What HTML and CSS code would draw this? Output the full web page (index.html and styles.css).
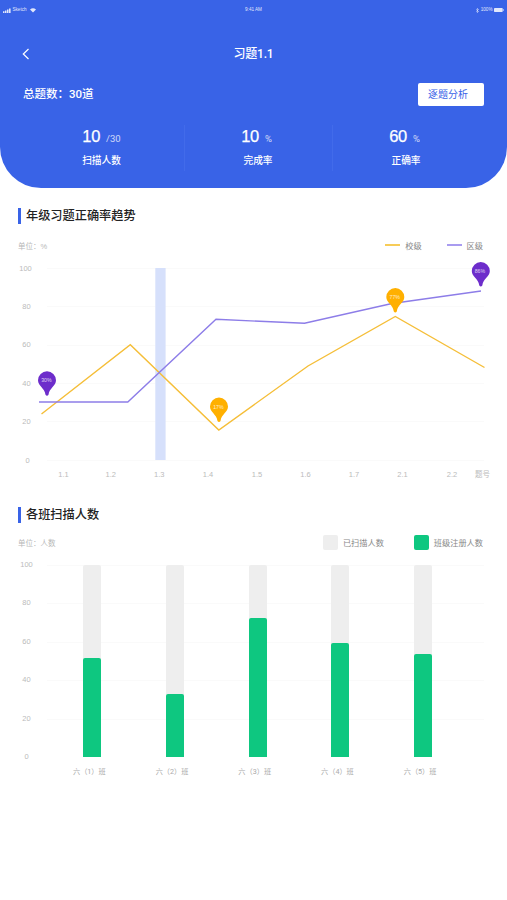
FILE: index.html
```html
<!DOCTYPE html>
<html lang="zh-CN">
<head>
<meta charset="utf-8">
<title>习题1.1</title>
<link rel="stylesheet" href="styles.css">
</head>
<body>
<header class="hero">
  <div class="status">
    <div class="status-left">
      <svg width="8" height="5" viewBox="0 0 8 5" fill="#fff"><path d="M0 3.2h1.5V5H0zM2 2.4h1.5V5H2zM4 1.4h1.5V5H4zM6 .4h1.6V5H6z"/></svg>
      <span>Sketch</span>
      <svg class="wifi" width="6" height="5" viewBox="0 0 6 5" fill="#fff"><path d="M0 1.5Q3-1 6 1.5L3 4.6z"/></svg>
    </div>
    <span class="clock">9:41 AM</span>
    <div class="status-right">
      <svg width="3" height="5" viewBox="0 0 3 5" fill="none" stroke="#fff" stroke-width=".6"><path d="M.3 1.4 2.5 3.5 1.4 4.6V.4L2.5 1.5.3 3.6"/></svg>
      <span>100%</span>
      <svg width="10" height="4" viewBox="0 0 10 4" fill="#fff"><rect width="8.7" height="4" rx=".7"/><rect x="9" y="1.2" width=".7" height="1.6"/></svg>
    </div>
  </div>
  <nav class="navbar">
    <svg class="back" width="8" height="12" viewBox="0 0 8 12" fill="none" stroke="#fff" stroke-width="1.2"><path d="M6.5 1 1.3 6l5.2 5"/></svg>
    <h1>习题1.1</h1>
  </nav>
  <div class="summary">
    <span>总题数：30道</span>
    <button>逐题分析</button>
  </div>
  <div class="stats">
    <div class="stat first"><p><b>10</b><small>/30</small></p><span>扫描人数</span></div>
    <div class="stat"><p><b>10</b><small>%</small></p><span>完成率</span></div>
    <div class="stat"><p><b>60</b><small>%</small></p><span>正确率</span></div>
  </div>
</header>

<section class="trend">
  <h2>年级习题正确率趋势</h2>
  <div class="meta">
    <span class="unit">单位：%</span>
    <span class="key"><i class="line school"></i>校级</span>
    <span class="key"><i class="line district"></i>区级</span>
  </div>
  <svg class="line-chart" width="507" height="230" viewBox="0 255 507 230">
    <path class="grid" d="M47 268.5h437M47 306.5h437M47 345.5h437M47 383.5h437M47 421.5h437M47 460.5h437"/>
    <g class="axis">
      <text x="25.5" y="270.6">100</text><text x="26.5" y="309">80</text><text x="26.5" y="347.4">60</text>
      <text x="26.5" y="385.8">40</text><text x="26.5" y="424.2">20</text><text x="27.5" y="462.6">0</text>
      <text x="63.5" y="476.6">1.1</text><text x="110.8" y="476.6">1.2</text><text x="159.3" y="476.6">1.3</text>
      <text x="208" y="476.6">1.4</text><text x="257" y="476.6">1.5</text><text x="305.5" y="476.6">1.6</text>
      <text x="354" y="476.6">1.7</text><text x="402.5" y="476.6">2.1</text><text x="452" y="476.6">2.2</text>
      <text class="cjk" x="482.5" y="476.8">题号</text>
    </g>
    <rect x="155.3" y="268" width="10.3" height="192" fill="#d6e0fb"/>
    <path class="series gold" d="M41.5 414 130.3 344.8 218.8 430 308 366 395.3 316.5 484.5 367.5"/>
    <path class="series violet" d="M39 402H127.8L216 319.3 304.5 323.3 392 303.5 481 291"/>
    <g transform="translate(47 380.3)"><path class="pin-violet" d="M-9 0a9 9 0 1 1 18 0C9 6 2.4 7.4 1.5 14.5q-1.5 2-3 0C-2.4 7.4-9 6-9 0z"/><text class="pin" x="-.6" y="1.9">30%</text></g>
    <g transform="translate(219 406.6)"><path class="pin-gold" d="M-9 0a9 9 0 1 1 18 0C9 6 2.4 7.4 1.5 14.5q-1.5 2-3 0C-2.4 7.4-9 6-9 0z"/><text class="pin" x="-.6" y="1.9">17%</text></g>
    <g transform="translate(395.3 297)"><path class="pin-gold" d="M-9 0a9 9 0 1 1 18 0C9 6 2.4 7.4 1.5 14.5q-1.5 2-3 0C-2.4 7.4-9 6-9 0z"/><text class="pin" x="-.6" y="1.9">77%</text></g>
    <g transform="translate(480.8 271)"><path class="pin-violet" d="M-9 0a9 9 0 1 1 18 0C9 6 2.4 7.4 1.5 14.5q-1.5 2-3 0C-2.4 7.4-9 6-9 0z"/><text class="pin" x="-.9" y="1.9">86%</text></g>
  </svg>
</section>

<section class="classes">
  <h2>各班扫描人数</h2>
  <div class="meta">
    <span class="unit">单位：人数</span>
    <span class="key"><i class="box scanned"></i>已扫描人数</span>
    <span class="key"><i class="box enrolled"></i>班级注册人数</span>
  </div>
  <div class="bar-chart">
    <div class="scale"><span>100</span><span>80</span><span>60</span><span>40</span><span>20</span><span>0</span></div>
    <div class="plot">
      <div class="bar"><i style="height:99.5px"></i></div>
      <div class="bar"><i style="height:63.5px"></i></div>
      <div class="bar"><i style="height:139px"></i></div>
      <div class="bar"><i style="height:114px"></i></div>
      <div class="bar"><i style="height:103px"></i></div>
    </div>
  </div>
  <div class="names"><span>六（1）班</span><span>六（2）班</span><span>六（3）班</span><span>六（4）班</span><span>六（5）班</span></div>
</section>
</body>
</html>
```
FILE: styles.css
```css
* { box-sizing: border-box; margin: 0; padding: 0; }
body {
  width: 507px; height: 900px; overflow: hidden; background: #fff;
  font-family: Roboto, "Noto Sans CJK SC", sans-serif;
}
.hero {
  height: 188px; color: #fff; background: #3963e7;
  border-radius: 0 0 41px 41px;
}
.status {
  height: 20px; padding: 0 3px; display: grid; grid-template-columns: 1fr auto 1fr;
  align-items: center; font: 4.6px/6px "Liberation Sans", sans-serif;
}
.status-left, .status-right { display: flex; align-items: center; gap: 1.5px; opacity: .85; }
.clock { opacity: .85; }
.status-right { justify-content: flex-end; }
.wifi { margin-left: 2px; }
.navbar {
  height: 68px; padding: 0 22px; display: grid; grid-template-columns: 1fr auto 1fr;
  align-items: center;
}
.navbar h1 { font-size: 12px; line-height: 18px; font-weight: 500; letter-spacing: -.2px; }
.summary {
  height: 24px; margin-top: -6px; padding: 0 23px; display: flex;
  align-items: center; justify-content: space-between; font-size: 11.5px; font-weight: 500;
}
.summary > span { margin-top: -2px; }
.summary button {
  width: 66px; height: 23px; padding-right: 6px; border: 0; border-radius: 2px;
  background: #fff; color: #3963e7; font: 10px/22px "Noto Sans CJK SC", sans-serif;
}
.stats { display: grid; grid-template-columns: 148px 148px 148px; margin: 19px 0 0 36px; }
.stat { height: 46px; padding-right: 4px; text-align: center; }
.stat.first { padding-right: 17px; }
.stat + .stat { border-left: 1px solid #426bea; }
.stat p { height: 23px; line-height: 23px; display: flex; justify-content: center; align-items: baseline; gap: 6px; }
.stat b { font-family: "Liberation Sans", sans-serif; font-size: 16.5px; font-weight: 400; letter-spacing: -.3px; -webkit-text-stroke: .25px #fff; }
.stat small { font-size: 9.5px; opacity: .75; }
.stat > span { display: block; font-size: 9.7px; line-height: 26px; font-weight: 500; }
.stat + .stat > span { padding-left: 3px; }

h2 {
  height: 16px; margin-left: 18px; padding-left: 5px; border-left: 3px solid #3963e7;
  color: #222; font-size: 12.2px; line-height: 17px; font-weight: 500;
}
.trend { height: 319px; padding-top: 20px; }
.meta {
  display: flex; align-items: center; height: 16px; margin-top: 13px;
  padding: 0 24px 0 18px; font-size: 8.2px; color: #888;
}
.unit { margin-right: auto; font: 7.5px "Liberation Sans", "Noto Sans CJK SC", sans-serif; color: #b8b8b8; }
.key { display: flex; align-items: center; gap: 5px; }
.key + .key { margin-left: 25px; }
.line { width: 15px; height: 1.5px; }
.school { background: #f7cc58; }
.district { background: #a99cf0; }
.line-chart { display: block; margin-top: 2px; }
.grid { stroke: #fafafa; }
.axis { fill: #bbb; font: 7.5px "Liberation Sans", sans-serif; text-anchor: middle; }
.axis .cjk { font-family: "Noto Sans CJK SC", sans-serif; }
.series { fill: none; stroke-width: 1.4; }
.gold { stroke: #f5be38; }
.violet { stroke: #8d7de8; }
.pin-violet { fill: #6d2dcb; }
.pin-gold { fill: #ffb000; }
.pin { fill: #fff; opacity: .75; font: 5.2px "Liberation Sans", sans-serif; text-anchor: middle; }

.classes .meta { margin-top: 11px; }
.classes .key + .key { margin-left: 30px; }
.box { width: 15px; height: 15px; border-radius: 2px; }
.scanned { background: #eee; }
.enrolled { background: #0ec780; }
.bar-chart { display: flex; margin-top: 15px; height: 192px; }
.scale {
  width: 47px; height: 202px; margin-top: -5px; padding-left: 6px; display: flex;
  flex-direction: column; justify-content: space-between; text-align: center;
  font: 7.5px/10px "Liberation Sans", sans-serif; color: #bbb;
}
.plot {
  width: 437px; height: 192px; padding: 0 52px 0 36px; display: flex; justify-content: space-between;
  background: repeating-linear-gradient(#fafafa 0 1px, transparent 1px 38.4px);
}
.bar { width: 18px; height: 192px; display: flex; align-items: flex-end; background: #eee; border-radius: 2px 2px 0 0; }
.bar i { width: 18px; background: #0ec780; border-radius: 2px 2px 0 0; }
.names {
  display: grid; grid-template-columns: repeat(5, 82.7px); margin: 9px 0 0 48px;
  text-align: center; font-size: 7.2px; line-height: 12px; color: #aaa;
}
```
